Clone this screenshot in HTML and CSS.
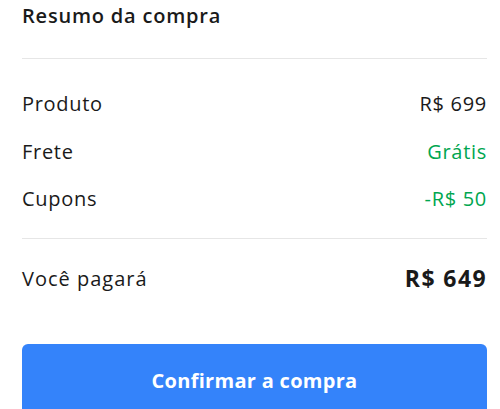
FILE: index.html
```html
<!DOCTYPE html>
<html lang="pt-BR">
<head>
    <meta charset="UTF-8">
    <meta name="viewport" content="width=device-width, initial-scale=1.0">
    <title>Resumo da compra</title>
    <link rel="stylesheet" href="styles.css">
</head>
<body>
    <div class="summary">
        <h2>Resumo da compra</h2>
        <div class="lines">
            <div class="row">
                <span>Produto</span>
                <span>R$ 699</span>
            </div>
            <div class="row">
                <span>Frete</span>
                <span class="green">Grátis</span>
            </div>
            <div class="row">
                <span>Cupons</span>
                <span class="green">-R$ 50</span>
            </div>
        </div>
        <div class="total">
            <span>Você pagará</span>
            <strong>R$ 649</strong>
        </div>
        <button type="button">Confirmar a compra</button>
    </div>
</body>
</html>
```

FILE: styles.css
```css
* {
    margin: 0;
    padding: 0;
    box-sizing: border-box;
}
body {
    font-family: 'Open Sans', sans-serif;
    background: #ffffff;
    color: #1a1a1a;
}
.summary {
    padding: 0 13px 0 22px;
}
h2 {
    font-size: 20px;
    font-weight: 600;
    letter-spacing: 0.8px;
    line-height: 32px;
    height: 59px;
    border-bottom: 1px solid #e6e6e6;
    color: #1a1a1a;
}
.lines {
    padding: 21px 0 15px;
    border-bottom: 1px solid #e6e6e6;
}
.row, .total {
    display: flex;
    justify-content: space-between;
    align-items: center;
    font-size: 20px;
    letter-spacing: 0.7px;
    height: 47.5px;
}
.green {
    color: #00a650;
}
.total {
    margin-top: 16px;
}
.total span {
    letter-spacing: 1px;
}
.total strong {
    font-size: 23px;
    font-weight: 700;
    letter-spacing: 1.4px;
}
button {
    display: block;
    width: 100%;
    height: 72px;
    margin-top: 42px;
    background-color: #3483fa;
    color: #ffffff;
    border: none;
    border-radius: 6px;
    font-family: inherit;
    font-size: 20px;
    font-weight: 700;
    letter-spacing: 0.3px;
    cursor: pointer;
}
```
